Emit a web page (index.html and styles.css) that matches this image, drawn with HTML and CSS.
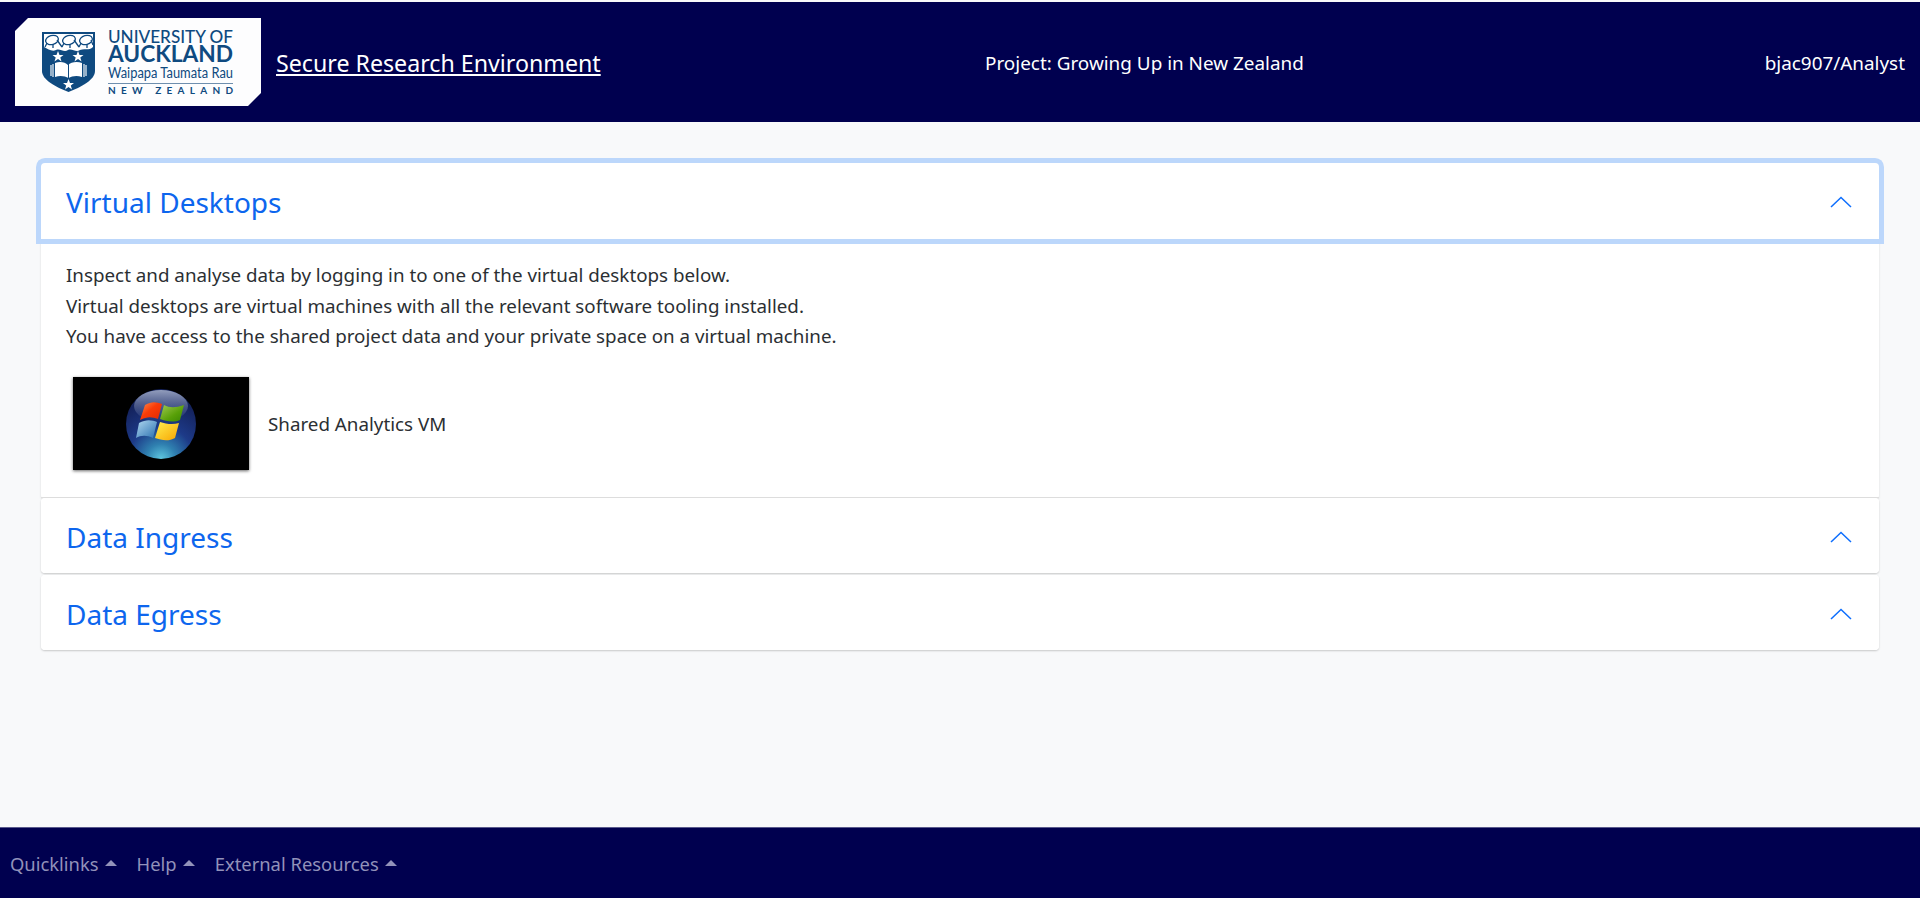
FILE: index.html
```html
<!DOCTYPE html>
<html lang="en">
<head>
<meta charset="utf-8">
<title>Secure Research Environment</title>
<link rel="stylesheet" href="styles.css">
</head>
<body>
<header class="topbar">
  <div class="brand">
    <svg class="logo" width="246" height="88" viewBox="0 0 246 88" aria-label="University of Auckland">
      <path d="M13 0H246V75L233 88H0V13Z" fill="#fdfdfe"/>
      <path d="M27 14H80V53C80 62 66 69 53.500 74C41 69 27 62 27 53Z" fill="#0f4a80"/>
      <path d="M29 16H78V29C74 33 69 30 65 32C61 35 57 30 53 32C49 35 45 30 41 32C37 34 33 31 29 29Z" fill="#fff"/>
      <g fill="none" stroke="#0f4a80" stroke-width="1.300">
        <ellipse cx="37" cy="22" rx="6.500" ry="4.500" transform="rotate(-15 37 22)"/>
        <ellipse cx="54" cy="22" rx="6.500" ry="4.500" transform="rotate(-15 54 22)"/>
        <ellipse cx="71" cy="22" rx="6.500" ry="4.500" transform="rotate(-15 71 22)"/>
        <path d="M32 25L30 29M38 26L38 30M42 22L47 29M49 25L47 29M55 26L55 30M59 22L64 29M66 25L64 29M72 26L72 30M76 22L78 27"/>
      </g>
      <path d="M43 33L44.500 37H48.500L45.300 39.500L46.500 43.500L43 41L39.500 43.500L40.700 39.500L37.500 37H41.500ZM63 33L64.500 37H68.500L65.300 39.500L66.500 43.500L63 41L59.500 43.500L60.700 39.500L57.500 37H61.500ZM53.500 61L55 65H59L55.800 67.500L57 71.500L53.500 69L50 71.500L51.200 67.500L48 65H52Z" fill="#fff"/>
      <path d="M40 45C45 43 50 44 53 47C56 44 62 43 67 45V59C62 57 57 58 53.500 60C50 58 45 57 40 59Z" fill="#fff"/>
      <path d="M53.500 46V60" stroke="#0f4a80"/>
      <path d="M38 46V59M36 47V58M69 46V59M71 47V58" stroke="#dfe8f0" stroke-width="1.300"/>
      <text class="logo-line logo-a" x="93" y="25" textLength="125" lengthAdjust="spacingAndGlyphs">UNIVERSITY OF</text>
      <text class="logo-line logo-b" x="93" y="44" textLength="125" lengthAdjust="spacingAndGlyphs">AUCKLAND</text>
      <text class="logo-line logo-c" x="93" y="60" textLength="125" lengthAdjust="spacingAndGlyphs">Waipapa Taumata Rau</text>
      <rect x="93" y="65" width="125" height="1" fill="#6f8fae"/>
      <text class="logo-line logo-d" x="93" y="76" textLength="125">NEW ZEALAND</text>
    </svg>
    <a class="site-title" href="#">Secure Research Environment</a>
  </div>
  <div class="project">Project: Growing Up in New Zealand</div>
  <div class="user">bjac907/Analyst</div>
</header>

<main class="content">
  <section class="accordion">
    <div class="item">
      <button class="acc-head focused" type="button">
        <span>Virtual Desktops</span>
        <svg class="chevron" width="22" height="12" viewBox="0 0 22 12"><path d="M1 11L11 1.500L21 11" fill="none" stroke="#0d6efd" stroke-width="1.500"/></svg>
      </button>
      <div class="acc-body">
        <p class="intro">Inspect and analyse data by logging in to one of the virtual desktops below.<br>Virtual desktops are virtual machines with all the relevant software tooling installed.<br>You have access to the shared project data and your private space on a virtual machine.</p>
        <a class="vm" href="#">
          <span class="vm-thumb">
            <svg width="72" height="72" viewBox="0 0 72 72">
              <defs>
                <radialGradient id="orb" cx="50%" cy="100%" r="85%">
                  <stop offset="0" stop-color="#5fc8e0"/>
                  <stop offset="0.25" stop-color="#2f80b0"/>
                  <stop offset="0.55" stop-color="#1d3a88"/>
                  <stop offset="1" stop-color="#14225c"/>
                </radialGradient>
                <linearGradient id="gloss" x1="0" y1="0" x2="0" y2="1">
                  <stop offset="0" stop-color="#c8d2e6" stop-opacity="0.700"/>
                  <stop offset="1" stop-color="#8fa0c8" stop-opacity="0"/>
                </linearGradient>
                <linearGradient id="red" x1="0" y1="0" x2="1" y2="1"><stop offset="0" stop-color="#ff9050"/><stop offset="0.45" stop-color="#f83c08"/><stop offset="1" stop-color="#e42800"/></linearGradient>
                <linearGradient id="green" x1="0" y1="0" x2="1" y2="1"><stop offset="0" stop-color="#a0c850"/><stop offset="0.6" stop-color="#58a008"/><stop offset="1" stop-color="#3a8604"/></linearGradient>
                <linearGradient id="blue" x1="0" y1="0" x2="1" y2="1"><stop offset="0" stop-color="#b0d8f0"/><stop offset="1" stop-color="#2a70b0"/></linearGradient>
                <linearGradient id="yellow" x1="0" y1="0" x2="1" y2="1"><stop offset="0" stop-color="#fff050"/><stop offset="1" stop-color="#f8a400"/></linearGradient>
              </defs>
              <circle cx="36" cy="36" r="35" fill="url(#orb)"/>
              <ellipse cx="36" cy="18" rx="27" ry="16" fill="url(#gloss)"/>
              <path d="M20 17C27 13 31 14 37 16L33 31C27 29 23 28 15 32Z" fill="url(#red)"/>
              <path d="M39 17C45 20 50 20 59 17L55 32C48 35 41 33 35 31Z" fill="url(#green)"/>
              <path d="M14 35C21 31 27 32 32 34L28 50C22 47 16 47 11 50Z" fill="url(#blue)"/>
              <path d="M35 34C41 36 48 37 54 35L50 50C43 54 36 52 30 50Z" fill="url(#yellow)"/>
            </svg>
          </span>
          <span class="vm-name">Shared Analytics VM</span>
        </a>
      </div>
    </div>
    <div class="item rest">
      <button class="acc-head short" type="button">
        <span>Data Ingress</span>
        <svg class="chevron" width="22" height="12" viewBox="0 0 22 12"><path d="M1 11L11 1.500L21 11" fill="none" stroke="#0d6efd" stroke-width="1.500"/></svg>
      </button>
    </div>
    <div class="item rest spaced">
      <button class="acc-head short" type="button">
        <span>Data Egress</span>
        <svg class="chevron" width="22" height="12" viewBox="0 0 22 12"><path d="M1 11L11 1.500L21 11" fill="none" stroke="#0d6efd" stroke-width="1.500"/></svg>
      </button>
    </div>
  </section>
</main>

<footer class="footbar">
  <a class="foot-link" href="#">Quicklinks<span class="caret"></span></a>
  <a class="foot-link" href="#">Help<span class="caret"></span></a>
  <a class="foot-link" href="#">External Resources<span class="caret"></span></a>
</footer>
</body>
</html>
```

FILE: styles.css
```css
* { box-sizing: border-box; }
html, body { height: 100%; }
body {
  margin: 0;
  height: 898px;
  overflow: hidden;
  display: flex;
  flex-direction: column;
  background: #f8f9fa;
  color: #2b2f33;
  font-family: "Noto Sans", "Open Sans", sans-serif;
  font-size: 18.800px;
}
.topbar {
  height: 120px;
  margin-top: 2px;
  padding: 0 15px;
  flex: none;
  display: flex;
  align-items: center;
  background: #00004f;
  color: #fff;
}
.brand { width: 970px; flex: none; display: flex; align-items: center; gap: 15px; }
.logo { display: block; flex: none; }
.site-title { color: #fff; font-size: 23.200px; text-decoration: underline; padding-top: 2px; }
.logo-line { font-family: "Lato", "Liberation Sans", sans-serif; fill: #0f4a80; }
.logo-a { font-size: 18px; font-weight: 500; }
.logo-b { font-size: 23px; font-weight: 700; }
.logo-c { font-size: 14.500px; }
.logo-d { font-size: 10px; font-weight: 700; }
.project { font-size: 18.900px; padding-top: 2px; }
.user { margin-left: auto; text-align: right; font-size: 18.900px; padding-top: 2px; }
.content { flex: 1; padding: 41px 41px 0; }
.accordion { width: 1838px; }
.item {
  background: #fff;
  border-radius: 4px;
}
.rest { box-shadow: 0 1px 2px rgba(0, 0, 0, .2); }
.spaced { margin-top: 2px; }
.acc-head {
  width: 100%;
  height: 76px;
  padding: 2px 27px 0 25px;
  display: flex;
  align-items: center;
  justify-content: space-between;
  background: #fff;
  border: 0;
  color: #0d66ee;
  font-family: inherit;
  font-size: 28px;
  text-align: left;
}
.short { height: 75px; border-radius: 4px; }
.focused {
  position: relative;
  border-radius: 4px 4px 0 0;
  box-shadow: 0 0 0 5px #bcd7fb;
}
.acc-body {
  height: 259px;
  padding: 21px 25px 0;
  border-bottom: 1px solid #dfdfdf;
  box-shadow: 0 1px 2px rgba(0, 0, 0, .12);
}
.intro { margin: 0; line-height: 30.700px; }
.vm { display: flex; align-items: center; gap: 19px; margin: 25px 0 0 7px; color: inherit; text-decoration: none; }
.vm-thumb {
  width: 176px;
  height: 93px;
  display: flex;
  align-items: center;
  justify-content: center;
  background: #000;
  box-shadow: 0 1px 3px rgba(0, 0, 0, .6);
}
.vm-thumb svg { display: block; }
.footbar {
  height: 71px;
  flex: none;
  display: flex;
  align-items: center;
  gap: 20px;
  padding: 0 10px;
  background: #00004f;
  border-top: 1px solid #5a5a8c;
}
.foot-link {
  display: flex;
  align-items: center;
  color: #9292ba;
  font-size: 18.400px;
  text-decoration: none;
}
.caret {
  width: 0;
  height: 0;
  margin-left: 6px;
  border-left: 6px solid transparent;
  border-right: 6px solid transparent;
  border-bottom: 6px solid #9292ba;
}
```
